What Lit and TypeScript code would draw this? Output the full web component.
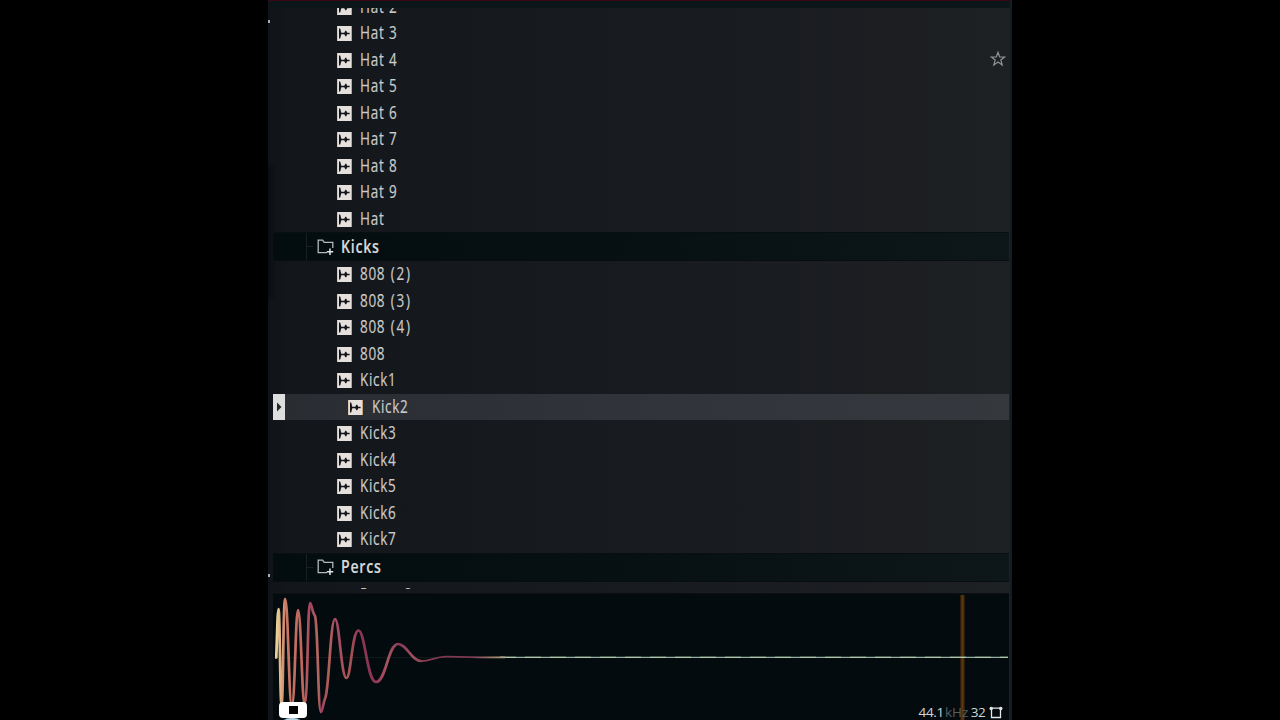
import { LitElement, html, css, svg } from "lit";
import { customElement } from "lit/decorators.js";
import { classMap } from "lit/directives/class-map.js";

type Row = { label: string; kind: "file" | "folder"; selected?: boolean; starred?: boolean; peek?: boolean };

const file = (label: string, extra: Partial<Row> = {}): Row => ({ label, kind: "file", ...extra });
const folder = (label: string): Row => ({ label, kind: "folder" });

const ROWS: Row[] = [
  file("Hat 2"), file("Hat 3"), file("Hat 4", { starred: true }), file("Hat 5"), file("Hat 6"),
  file("Hat 7"), file("Hat 8"), file("Hat 9"), file("Hat"),
  folder("Kicks"),
  file("808 (2)"), file("808 (3)"), file("808 (4)"), file("808"), file("Kick1"),
  file("Kick2", { selected: true }), file("Kick3"), file("Kick4"), file("Kick5"), file("Kick6"), file("Kick7"),
  folder("Percs"),
  file("Percs 2", { peek: true }),
];

const sampleIcon = html`<svg class="sample" width="15" height="15" viewBox="0 0 15 15">
  <rect width="15" height="15" fill="#e6e0dc" />
  <path d="M14.5 0V15" stroke="#c9a27c" stroke-width="1" />
  <path d="M0.5 0V15" stroke="#dcc3ae" stroke-width="1" />
  <path d="M2 2.5H3.2L4.300 6.800H7.300L8.300 4.800H9.200L10.200 6.800H12.600V8.200H10.200L9.200 10.200H8.300L7.300 8.200H4.300L3.200 12.500H2Z" fill="#15161c" />
</svg>`;

const folderIcon = html`<svg class="folder-icon" width="18" height="17" viewBox="0 0 18 17" fill="none" stroke="#b3b9b9" stroke-width="1.3">
  <path d="M10 13.6H1.2V1.2H5.6L7.2 3.4H15.8V9" />
  <path d="M13 9.5V16M9.8 12.8H16.2" stroke="#dfe3e3" stroke-width="1.5" />
</svg>`;

const starIcon = html`<svg class="star" width="16" height="16" viewBox="0 0 16 16">
  <path d="M8 1.3L9.7 6H14.6L10.8 9L12.2 14L8 11.1L3.8 14L5.2 9L1.4 6H6.3Z" fill="none" stroke="#8f9194" stroke-width="1.2" />
</svg>`;

@customElement("sample-row")
class SampleRow extends LitElement {
  static properties = { row: { attribute: false } };
  declare row: Row;

  static styles = css`
    :host { display: block; flex: none; }
    .row { height: 26.5px; display: flex; align-items: center; box-sizing: border-box; padding-left: 63.5px; }
    .sample { flex: none; margin-top: 0.5px; }
    .label {
      font: 500 18px/26px "Open Sans", "Noto Sans", sans-serif;
      color: #cbcbcb; margin-left: 8.5px; margin-bottom: 2px; white-space: pre;
      letter-spacing: 0.95px; word-spacing: 0.6px;
      -webkit-text-stroke: 0.2px currentColor;
      transform: scaleX(0.75); transform-origin: left center;
    }
    .paren { letter-spacing: 2.3px; margin-left: 1.2px; }
    .star { margin-left: auto; margin-right: 3px; margin-bottom: 1px; }
    .peek .sample { margin-top: 4px; }
    .peek .label { margin-bottom: 1.8px; word-spacing: 3px; }
    .selected { background: linear-gradient(90deg, #292c31, #303339 45%, #35383d); padding-left: 0; }
    .selected .sample { margin-left: 63px; }
    .handle { width: 12px; align-self: stretch; background: #dededf; display: flex; align-items: center; flex: none; }
    .folder {
      height: 29px; padding-left: 0; border-top: 1px solid #080f12; border-bottom: 1px solid #080d10;
      background: linear-gradient(90deg, #030c0e, #071012 50%, #0d1618);
    }
    .folder .label { font-weight: 600; color: #d7d9d8; margin-left: 6px; transform: scaleX(0.785); }
    .guide { width: 33px; align-self: stretch; border-right: 1px solid #172022; box-sizing: content-box; }
    .tick { width: 6px; height: 1px; background: #172022; }
    .folder-icon { flex: none; margin-left: 3.5px; margin-top: 1px; }
  `;

  private renderLabel(text: string) {
    const at = text.indexOf("(");
    return at < 0
      ? html`<span class="label">${text}</span>`
      : html`<span class="label">${text.slice(0, at)}<span class="paren">${text.slice(at)}</span></span>`;
  }

  render() {
    const r = this.row;
    if (r.kind === "folder") {
      return html`<div class="row folder"><span class="guide"></span><span class="tick"></span>${folderIcon}${this.renderLabel(r.label)}</div>`;
    }
    return html`<div class=${classMap({ row: true, selected: !!r.selected, peek: !!r.peek })}>
      ${r.selected
        ? html`<span class="handle"><svg width="12" height="14" viewBox="0 0 12 14"><path d="M4 2.500L8.500 7L4 11.500Z" fill="#24262a" /></svg></span>`
        : null}
      ${sampleIcon}${this.renderLabel(r.label)}${r.starred ? starIcon : null}
    </div>`;
  }
}

@customElement("wave-preview")
class WavePreview extends LitElement {
  static styles = css`
    :host { display: block; position: relative; height: 126px; overflow: hidden; background: #030b0e; }
    .wave { display: block; }
    .format {
      position: absolute; right: 6px; bottom: -1px; display: flex; align-items: center;
      font: 400 13.5px/17px "Open Sans", sans-serif; color: #d2d4d4; letter-spacing: -0.35px;
    }
    .unit { color: #555d60; margin: 0 2.5px 0 1px; letter-spacing: 0; }
    .crop { margin-left: 3.5px; }
    .stop {
      position: absolute; left: 6px; top: 108px; width: 28px; height: 15.5px; border-radius: 4px;
      background: #fff; display: flex; align-items: center; justify-content: center;
    }
    .square { width: 9px; height: 8px; background: #000; }
    .knob {
      position: absolute; left: 7px; top: 123px; width: 24px; height: 20px; border-radius: 50%;
      background: #b9d3e2; border-top: 1px solid #507f9b; box-sizing: border-box;
    }
  `;

  render() {
    return html`
      <svg class="wave" width="736" height="126" viewBox="273 594 736 126" fill="none">
        <defs>
          <linearGradient id="tone" gradientUnits="userSpaceOnUse" x1="275" y1="0" x2="520" y2="0">
            <stop offset="0" stop-color="#ecdca6" />
            <stop offset="0.018" stop-color="#e2bd8a" />
            <stop offset="0.045" stop-color="#c97864" />
            <stop offset="0.12" stop-color="#bd655d" />
            <stop offset="0.145" stop-color="#a04263" />
            <stop offset="0.175" stop-color="#b56b5d" />
            <stop offset="0.19" stop-color="#a13f62" />
            <stop offset="0.22" stop-color="#b16159" />
            <stop offset="0.25" stop-color="#a34966" />
            <stop offset="0.3" stop-color="#a95657" />
            <stop offset="0.35" stop-color="#8b3656" />
            <stop offset="0.4" stop-color="#8d3453" />
            <stop offset="0.46" stop-color="#a95560" />
            <stop offset="0.51" stop-color="#86395a" />
            <stop offset="0.56" stop-color="#9b5160" />
            <stop offset="0.62" stop-color="#853a50" />
            <stop offset="0.8" stop-color="#7b3753" />
            <stop offset="0.9" stop-color="#a48a6d" />
            <stop offset="1" stop-color="#b5cfb6" />
          </linearGradient>
        </defs>
        ${svg`
          <path d="M273 657.5H1009" stroke="#0c1a1a" />
          <path d="M962.5 595V720" stroke="#2a1b0c" stroke-width="5" />
          <path d="M962.5 595V720" stroke="#59380f" stroke-width="2.4" />
          <path d="M500 657.4H1008" stroke="#8fae9f" stroke-width="1.3" />
          <path d="M500 657.4H1008" stroke="#b3c8ab" stroke-width="1.3" stroke-dasharray="16 9" />
          <path stroke="url(#tone)" stroke-width="2.7" stroke-linejoin="round"
            d="M275 657.4H276.3C277 640 277.5 609 278.5 609C280 609 280 704 281.5 704C283.5 704 283 599 285.2 599C288 599 289 706 291.7 706C295 706 295.5 610 298 610C301 610 302 704 304.5 704C308 704 307.5 603 310 603C311.5 603 312 612 315 616C318 625 318 712 321 712C322.5 712 323 703 325.5 697C329 688 330.500 619 335 619C339.500 619 341 678 346.500 678C351 678 352 630.500 358.500 630.500C365 630.500 367 682 376 682C386 682 388 644 398 644C407 644 411 661 421.500 661" />
          <path stroke="url(#tone)" stroke-width="1.8"
            d="M421 661.2C430 661.4 435 656.6 446 656.6C458 656.600 462 657.400 480 657.400H505" />
        `}
      </svg>
      <div class="knob"></div>
      <div class="stop"><div class="square"></div></div>
      <div class="format"><span>44.1</span><span class="unit">kHz</span><span>32</span>
        <svg class="crop" width="14" height="13" viewBox="0 0 14 13" fill="none" stroke="#e3e4e4" stroke-width="1.3">
          <path d="M2.500 2.200V11.500H11.500V2.200M2 2.200H12" />
          <circle cx="2.200" cy="2.400" r="1.100" fill="#e3e4e4" />
          <circle cx="11.800" cy="2.400" r="1.100" fill="#e3e4e4" />
        </svg>
      </div>
    `;
  }
}

@customElement("app-root")
class AppRoot extends LitElement {
  static styles = css`
    :host { display: flex; justify-content: center; width: 1280px; height: 720px; background: #000; overflow: hidden; }
    .panel {
      box-sizing: border-box; width: 744px; height: 720px; display: flex; flex-direction: column; position: relative;
      padding: 0 3px 0 5px; background: linear-gradient(90deg, #101419, #13171c 3%, #171a1f 45%, #1c1e22 85%, #1e2123);
    }
    .top { flex: none; height: 8px; box-sizing: border-box; margin: 0 -3px 0 -5px; background: #0c1517; border-top: 1px solid #3a0716; }
    .list { height: 580.5px; flex: none; overflow: hidden; display: flex; flex-direction: column; }
    .items { flex: none; margin-top: -14.5px; display: flex; flex-direction: column; }
    .split { height: 5.5px; flex: none; box-sizing: border-box; border-bottom: 1px solid #0b1012; }
    .edge { position: absolute; right: 0; top: 0; width: 2px; height: 720px; background: #131c1e; }
    .mark { position: absolute; left: 0; width: 1.5px; height: 3px; background: #a9adaf; }
    .upper { top: 20px; }
    .lower { top: 574px; }
    .shade { position: absolute; left: 0; top: 165px; width: 9px; height: 135px; background: linear-gradient(90deg, #0b0e12, transparent); }
  `;

  render() {
    return html`<div class="panel">
      <div class="top"></div>
      <div class="list"><div class="items">${ROWS.map((r) => html`<sample-row .row=${r}></sample-row>`)}</div></div>
      <div class="split"></div>
      <wave-preview></wave-preview>
      <span class="edge"></span><span class="shade"></span>
      <span class="mark upper"></span><span class="mark lower"></span>
    </div>`;
  }
}
